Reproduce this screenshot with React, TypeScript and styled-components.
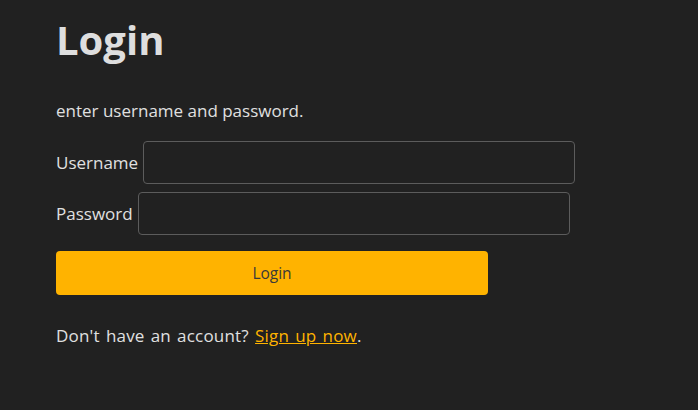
import styled, { createGlobalStyle } from "styled-components";

const GlobalStyle = createGlobalStyle`
  html, body {
    margin: 0;
    background: #212121;
  }
  body {
    font-family: "Open Sans", "Noto Sans", sans-serif;
    color: #e0e0e0;
  }
`;

export default function App() {
  return (
    <>
      <GlobalStyle />
      <LoginPage>
        <Title>Login</Title>
        <Hint>enter username and password.</Hint>
        <LoginForm onSubmit={(e) => e.preventDefault()}>
          <FieldRow>
            <FieldLabel htmlFor="username">Username</FieldLabel>
            <TextInput id="username" type="text" />
          </FieldRow>
          <FieldRow>
            <FieldLabel htmlFor="password">Password</FieldLabel>
            <TextInput id="password" type="password" />
          </FieldRow>
          <SubmitButton type="submit">Login</SubmitButton>
        </LoginForm>
        <Footer>
          Don't have an account? <SignupLink href="#">Sign up now</SignupLink>.
        </Footer>
      </LoginPage>
    </>
  );
}

const LoginPage = styled.main`
  padding: 12px 56px 0;
  display: flex;
  flex-direction: column;
`;

const Title = styled.h1`
  margin: 0;
  font-size: 40px;
  font-weight: 700;
  line-height: 56px;
  color: #dedede;
`;

const Hint = styled.p`
  margin: 31px 0 0;
  font-size: 17px;
  line-height: 23px;
`;

const LoginForm = styled.form`
  margin-top: 19px;
  display: flex;
  flex-direction: column;
  gap: 8px;
`;

const FieldRow = styled.div`
  display: flex;
  align-items: center;
  gap: 5px;
`;

const FieldLabel = styled.label`
  font-size: 17px;
`;

const TextInput = styled.input`
  box-sizing: border-box;
  width: 432px;
  height: 43px;
  background: #212121;
  border: 1px solid #5c5c5c;
  border-radius: 4px;
  color: #e0e0e0;
  font-size: 16px;
  padding: 0 10px;
  outline: none;
`;

const SubmitButton = styled.button`
  margin-top: 8px;
  width: 432px;
  height: 44px;
  background: #ffb300;
  border: none;
  border-radius: 4px;
  color: #3a3a3a;
  font-family: inherit;
  font-size: 15.5px;
  cursor: pointer;
`;

const Footer = styled.p`
  margin: 29px 0 0;
  font-size: 17px;
  line-height: 23px;
  word-spacing: 1.5px;
  letter-spacing: 0.2px;
`;

const SignupLink = styled.a`
  color: #ffb300;
  text-decoration: underline;
`;
